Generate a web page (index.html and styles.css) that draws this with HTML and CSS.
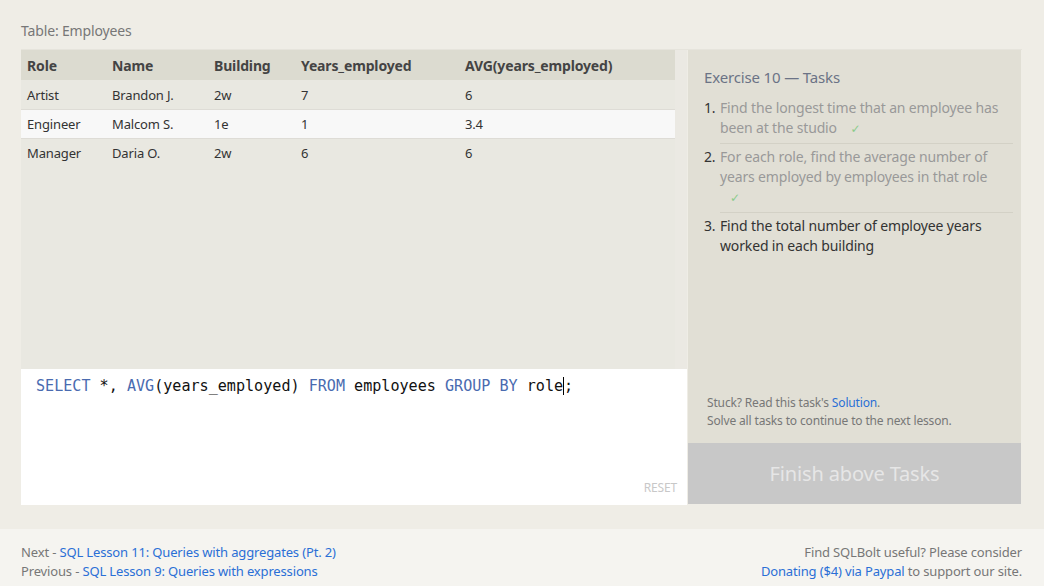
FILE: index.html
```html
<!DOCTYPE html>
<html>
<head>
<meta charset="utf-8">
<link rel="stylesheet" href="styles.css">
</head>
<body>
<div class="page">
  <div class="caption">Table: Employees</div>
  <div class="workspace">
    <div class="left">
      <div class="table-wrap">
        <div class="table-area">
          <table class="results">
            <thead>
              <tr><th class="c1">Role</th><th class="c2">Name</th><th class="c3">Building</th><th class="c4">Years_employed</th><th class="c5">AVG(years_employed)</th></tr>
            </thead>
            <tbody>
              <tr><td>Artist</td><td>Brandon J.</td><td>2w</td><td>7</td><td>6</td></tr>
              <tr class="alt"><td>Engineer</td><td>Malcom S.</td><td>1e</td><td>1</td><td>3.4</td></tr>
              <tr><td>Manager</td><td>Daria O.</td><td>2w</td><td>6</td><td>6</td></tr>
            </tbody>
          </table>
        </div>
        <div class="track"></div>
      </div>
      <div class="editor">
        <div class="code"><span class="kw">SELECT</span> *, <span class="kw">AVG</span>(years_employed) <span class="kw">FROM</span> employees <span class="kw">GROUP BY</span> role<span class="cursor"></span>;</div>
        <div class="reset">RESET</div>
      </div>
    </div>
    <div class="right">
      <div class="tasks">
        <div class="tasks-title">Exercise 10 — Tasks</div>
        <ol class="task-list">
          <li class="task done"><span class="num">1.</span><span class="txt">Find the longest time that an employee has been at the studio <span class="check">✓</span></span></li>
          <li class="task done"><span class="num">2.</span><span class="txt">For each role, find the average number of years employed by employees in that role <span class="check">✓</span></span></li>
          <li class="task"><span class="num">3.</span><span class="txt">Find the total number of employee years worked in each building</span></li>
        </ol>
        <div class="help">
          <div>Stuck? Read this task's <a href="#">Solution</a>.</div>
          <div>Solve all tasks to continue to the next lesson.</div>
        </div>
      </div>
      <div class="finish">Finish above Tasks</div>
    </div>
  </div>
</div>
<div class="footer">
  <div class="nav">
    <div>Next - <a href="#">SQL Lesson 11: Queries with aggregates (Pt. 2)</a></div>
    <div>Previous - <a href="#">SQL Lesson 9: Queries with expressions</a></div>
  </div>
  <div class="donate">
    <div>Find SQLBolt useful? Please consider</div>
    <div><a href="#">Donating ($4) via Paypal</a> to support our site.</div>
  </div>
</div>
</body>
</html>
```
FILE: styles.css
```css
html, body {
  margin: 0;
  padding: 0;
}
body {
  background: #efede6;
  font-family: "Noto Sans", "DejaVu Sans", sans-serif;
  letter-spacing: -0.15px;
  color: #333;
  width: 1044px;
  height: 586px;
  overflow: hidden;
}
a {
  color: #2a6fd6;
  text-decoration: none;
}
.page {
  padding: 21px 22px 24px 21px;
}
.caption {
  font-size: 14px;
  color: #777;
  line-height: 20px;
  margin-bottom: 8px;
}
.workspace {
  display: flex;
  height: 455px;
  border-top: 1px solid #e6e4dc;
}
.left {
  width: 666px;
  display: flex;
  flex-direction: column;
}
.table-wrap {
  flex: 1;
  display: flex;
  background: #e9e8e1;
}
.table-area {
  flex: 1;
}
.track {
  width: 12px;
  background: #ebe9e3;
}
.results {
  border-collapse: collapse;
  width: 100%;
  font-size: 13px;
  color: #333;
}
.results th {
  background: #dcdbd0;
  height: 30px;
  text-align: left;
  font-weight: bold;
  font-size: 14px;
  padding: 0 0 0 6px;
  color: #444;
}
.results td {
  height: 28px;
  padding: 0 0 0 6px;
  border-top: 1px solid #dedcd6;
}
.results tbody tr:first-child td {
  border-top-color: #e9e8e1;
}
.results tr.alt td {
  background: #f8f8f8;
}
.c1 { width: 79px; }
.c2 { width: 96px; }
.c3 { width: 81px; }
.c4 { width: 158px; }
.editor {
  height: 136px;
  flex: none;
  background: #fff;
  position: relative;
}
.code {
  font-family: "DejaVu Sans Mono", monospace;
  letter-spacing: 0;
  font-size: 15.1px;
  color: #111;
  padding: 7px 0 0 15px;
  line-height: 20px;
}
.kw {
  color: #4a6bb0;
}
.cursor {
  display: inline-block;
  width: 1px;
  height: 18px;
  background: #000;
  vertical-align: -4px;
}
.reset {
  position: absolute;
  right: 10px;
  bottom: 9px;
  font-size: 12px;
  color: #c8c8c8;
}
.right {
  width: 333px;
  margin-left: 1px;
  margin-bottom: 1px;
  background: #e1dfd5;
  display: flex;
  flex-direction: column;
}
.tasks {
  flex: 1;
  padding: 17px 8px 0 16px;
  display: flex;
  flex-direction: column;
}
.tasks-title {
  font-size: 15px;
  color: #6b7386;
  line-height: 20px;
  margin-bottom: 11px;
}
.task-list {
  list-style: none;
  margin: 0;
  padding: 0;
}
.task {
  display: flex;
  font-size: 14px;
  line-height: 20px;
  padding-bottom: 4px;
}
.task + .task .txt {
  border-top: 1px solid #d3d1c6;
  padding-top: 3px;
}
.task + .task .num {
  padding-top: 4px;
}
.num {
  width: 16px;
  color: #333;
  flex: none;
}
.txt {
  flex: 1;
  color: #333;
}
.done .txt {
  color: #999;
}
.check {
  display: inline-block;
  color: #8bcb8b;
  font-size: 12px;
  margin: 0 10px;
}
.help {
  margin-top: auto;
  padding: 0 0 13px 3px;
  font-size: 12px;
  line-height: 18px;
  color: #777;
}
.finish {
  height: 61px;
  flex: none;
  background: #c8c8c8;
  color: #e6e6e6;
  font-size: 20px;
  display: flex;
  align-items: center;
  justify-content: center;
}
.footer {
  background: #f5f4f0;
  height: 57px;
  display: flex;
  justify-content: space-between;
  padding: 14px 22px 0 21px;
  box-sizing: border-box;
  font-size: 13px;
  line-height: 19px;
  color: #777;
}
.donate {
  text-align: right;
}
```
